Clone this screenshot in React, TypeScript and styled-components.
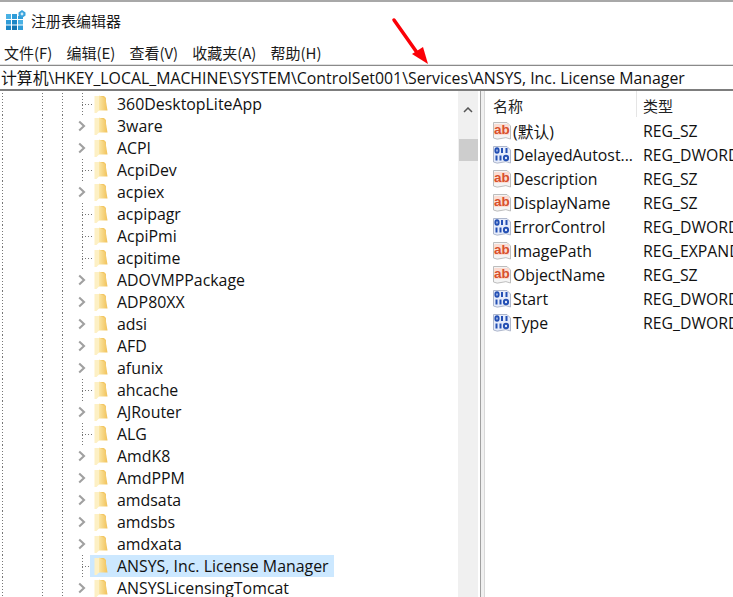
import React from "react";
import styled, { createGlobalStyle } from "styled-components";

const Global = createGlobalStyle`
  html, body { margin: 0; padding: 0; background: #fff; }
  body { font-family: "Noto Sans CJK SC", "Liberation Sans", sans-serif; }
  * { box-sizing: border-box; }
`;
const Win = styled.div`
  position: relative; width: 733px; height: 597px; overflow: hidden; background: #fff;
  display: flex; flex-direction: column; border-top: 2px solid #a8a8a8;
  font-family: "Open Sans", "Noto Sans CJK SC", sans-serif; color: #111;
`;
const Title = styled.div`
  height: 36px; display: flex; align-items: center; gap: 5px; padding: 0 0 0 6px;
  font: 15px "Noto Sans CJK SC", sans-serif; color: #1a1a1a;
`;
const Menu = styled.div`
  height: 28px; display: flex; gap: 14px; padding: 2px 0 0 4px; align-items: center;
  font: 15px "Noto Sans CJK SC", sans-serif; color: #1a1a1a;
  border-bottom: 2px solid #e0e0e0;
`;
const Address = styled.div`
  height: 26px; display: flex; align-items: center; padding-left: 1px; white-space: nowrap;
  font: 15.85px "Open Sans", "Noto Sans CJK SC", sans-serif; color: #111;
  border-top: 1px solid #8a8a8a; border-bottom: 2px solid #7d7d7d; margin-top: -1px;
`;
const Main = styled.div`flex: 1; display: flex; min-height: 0;`;
const Tree = styled.div`flex: 0 0 458px; overflow: hidden; padding-top: 2px;`;
const Row = styled.div`
  height: 22px; display: flex; align-items: center; position: relative; white-space: nowrap;
  font: 15.9px "Open Sans", "Noto Sans CJK SC", sans-serif; color: #111; padding-left: 78px;
  background-image:
    repeating-linear-gradient(to bottom, #777 0 1px, transparent 1px 3px),
    repeating-linear-gradient(to bottom, #777 0 1px, transparent 1px 3px),
    repeating-linear-gradient(to bottom, #777 0 1px, transparent 1px 3px);
  background-size: 1px 100%;
  background-repeat: no-repeat;
  background-position: 2px 0, 42px 0, 62px 0;
`;
const Slot = styled.span`width: 16px; height: 22px; flex: none; display: flex; align-items: center; justify-content: flex-start;`;
const Guide = styled.span`
  width: 12px; height: 22px; display: block; margin-left: 4px; flex: none;
  background-image:
    repeating-linear-gradient(to bottom, #777 0 1px, transparent 1px 3px),
    repeating-linear-gradient(to right, #777 0 1px, transparent 1px 3px);
  background-size: 1px 100%, 100% 1px;
  background-repeat: no-repeat;
  background-position: 0 0, 0 11px;
`;
const Label = styled.span<{ $sel?: boolean }>`
  display: flex; align-items: center; height: 22px; padding: 0 5px 0 4px; margin-left: -4px;
  background: ${p => (p.$sel ? "#cce8ff" : "transparent")}; gap: 9px;
`;
const Track = styled.div`
  flex: 0 0 20px; background: #f0f0f0; position: relative; display: flex; flex-direction: column; align-items: center; padding-top: 16px;
`;
const Thumb = styled.div`width: 19px; height: 22px; background: #cdcdcd; margin-top: 26px;`;
const Splitter = styled.div`
  flex: 0 0 8px; background: #fff; display: flex; justify-content: flex-start;
`;
const SplitLine = styled.div`
  width: 5px; margin-left: 2px; background: #f0f0f0; border-left: 1px solid #a0a0a0; border-right: 1px solid #d8d8d8;
`;
const List = styled.div`flex: 1; min-width: 0; overflow: hidden;`;
const Head = styled.div`
  height: 28px; display: flex; font: 15px "Noto Sans CJK SC", sans-serif; color: #222;
`;
const HName = styled.div`
  width: 151px; padding: 2px 0 0 7px; display: flex; align-items: center; border-right: 1px solid #e5e5e5; height: 26px;
`;
const HType = styled.div`padding: 2px 0 0 6px; display: flex; align-items: center; height: 26px;`;
const LRow = styled.div`
  height: 24px; display: flex; align-items: center; white-space: nowrap;
  font: 15.8px "Open Sans", "Noto Sans CJK SC", sans-serif; color: #111;
`;
const NameCell = styled.div`width: 157px; flex: none; display: flex; align-items: center; padding-left: 6px; gap: 1px;`;
const Arrow = styled.svg`position: absolute; left: 390px; top: 14px;`;
const Chrome = styled.svg`display: block; flex: none;`;

const Chev = () => (
  <Chrome width="8" height="12" viewBox="0 0 8 12">
    <path d="M1.2 1.5 L6 6 L1.2 10.5" fill="none" stroke="#a0a0a0" strokeWidth="2.1" />
  </Chrome>
);
const Folder = () => (
  <Chrome width="14" height="20" viewBox="0 0 14 20">
    <defs>
      <linearGradient id="fg" x1="0" x2="1" y1="0" y2="0">
        <stop offset="0" stopColor="#fbe6a4" />
        <stop offset="1" stopColor="#f1c25a" />
      </linearGradient>
    </defs>
    <path d="M0.5 2 H5 V16.5 L2.5 19 H0.5 Z" fill="#fdf0c4" />
    <path d="M5 2 H10 L12 4 V16 H5 Z" fill="#f3c866" />
    <path d="M5 1.5 L11.5 4.5 L13.5 16.5 H5 Z" fill="url(#fg)" />
  </Chrome>
);
const AB = () => (
  <Chrome width="20" height="20" viewBox="0 0 20 20">
    <path d="M1.5 1.5 H15 L18.5 5 V18 Q14 15.5 9 17.5 Q5 19 1.5 17 Z" fill="#f4f4f4" stroke="#bdbdbd" />
    <rect x="2" y="3" width="15" height="11" rx="1" fill="#fbdcd2" />
    <text x="2" y="13" fontFamily="Liberation Sans" fontWeight="700" fontSize="13.5" fill="#d8502c">ab</text>
  </Chrome>
);
const Bin = () => (
  <Chrome width="20" height="20" viewBox="0 0 20 20">
    <path d="M1.5 1.5 H15 L18.5 5 V18 Q14 15.5 9 17.5 Q5 19 1.5 17 Z" fill="#e6ecfa" stroke="#aeb7cc" />
    <g fill="none" stroke="#2450b4" strokeWidth="2">
      <ellipse cx="5" cy="5.5" rx="1.6" ry="2.2" />
      <path d="M10 3 V8" />
      <path d="M14.5 3 V8" />
      <path d="M4.5 10.5 V15.5" />
      <path d="M8.5 10.5 V15.5" />
      <ellipse cx="14" cy="13" rx="2.1" ry="2.3" />
    </g>
  </Chrome>
);
const Logo = () => (
  <Chrome width="20" height="20" viewBox="0 0 20 20">
    <g>
      <rect x="0" y="4" width="5" height="5" fill="#4ab1e4" /><rect x="6" y="4" width="5" height="5" fill="#2f9cd8" /><rect x="12" y="6" width="5" height="3" fill="#2f9cd8" />
      <rect x="0" y="10" width="5" height="4.5" fill="#2f9cd8" /><rect x="6" y="10" width="5" height="4.5" fill="#1b86c6" /><rect x="12" y="10" width="5" height="4.5" fill="#4ab1e4" />
      <rect x="0" y="15.5" width="5" height="4.5" fill="#1b86c6" /><rect x="6" y="15.5" width="5" height="4.5" fill="#1374b0" /><rect x="12" y="15.5" width="5" height="4.5" fill="#2f9cd8" />
    </g>
    <path d="M16 0 L19.5 2.5 V5.5 L16 8 L12.5 5.5 V2.5 Z" fill="#3aa3dc" />
    <circle cx="16" cy="4" r="1.4" fill="#cfeaf8" />
  </Chrome>
);

const rows: [string, boolean][] = [
  ["360DesktopLiteApp", false], ["3ware", true], ["ACPI", true], ["AcpiDev", false], ["acpiex", true],
  ["acpipagr", false], ["AcpiPmi", false], ["acpitime", false], ["ADOVMPPackage", true], ["ADP80XX", true],
  ["adsi", true], ["AFD", true], ["afunix", true], ["ahcache", false], ["AJRouter", true], ["ALG", false],
  ["AmdK8", true], ["AmdPPM", true], ["amdsata", true], ["amdsbs", true], ["amdxata", true],
  ["ANSYS, Inc. License Manager", false], ["ANSYSLicensingTomcat", true],
];
const values: [string, boolean, string][] = [
  ["(默认)", false, "REG_SZ"], ["DelayedAutost...", true, "REG_DWORD"], ["Description", false, "REG_SZ"],
  ["DisplayName", false, "REG_SZ"], ["ErrorControl", true, "REG_DWORD"], ["ImagePath", false, "REG_EXPAND_SZ"],
  ["ObjectName", false, "REG_SZ"], ["Start", true, "REG_DWORD"], ["Type", true, "REG_DWORD"],
];

export default function App() {
  return (
    <>
      <Global />
      <Win>
        <Title><Logo />注册表编辑器</Title>
        <Menu><span>文件(F)</span><span>编辑(E)</span><span>查看(V)</span><span>收藏夹(A)</span><span>帮助(H)</span></Menu>
        <Address>计算机\HKEY_LOCAL_MACHINE\SYSTEM\ControlSet001\Services\ANSYS, Inc. License Manager</Address>
        <Main>
          <Tree>
            {rows.map(([n, exp]) => (
              <Row key={n}>
                <Slot>{exp ? <Chev /> : <Guide />}</Slot>
                <Label $sel={n.startsWith("ANSYS,")}><Folder />{n}</Label>
              </Row>
            ))}
          </Tree>
          <Track>
            <svg width="10" height="6" viewBox="0 0 10 6"><path d="M1 5 L5 1 L9 5" fill="none" stroke="#555" strokeWidth="1.5" /></svg>
            <Thumb />
          </Track>
          <Splitter><SplitLine /></Splitter>
          <List>
            <Head><HName>名称</HName><HType>类型</HType></Head>
            {values.map(([n, bin, t]) => (
              <LRow key={n}>
                <NameCell>{bin ? <Bin /> : <AB />}{n}</NameCell>{t}
              </LRow>
            ))}
          </List>
        </Main>
        <Arrow width="40" height="50" viewBox="0 0 40 50">
          <path d="M4 4 L28 38" stroke="#fb0007" strokeWidth="3.5" strokeLinecap="round" />
          <path d="M22 38 L33 31 L38 48 Z" fill="#fb0007" />
        </Arrow>
      </Win>
    </>
  );
}
